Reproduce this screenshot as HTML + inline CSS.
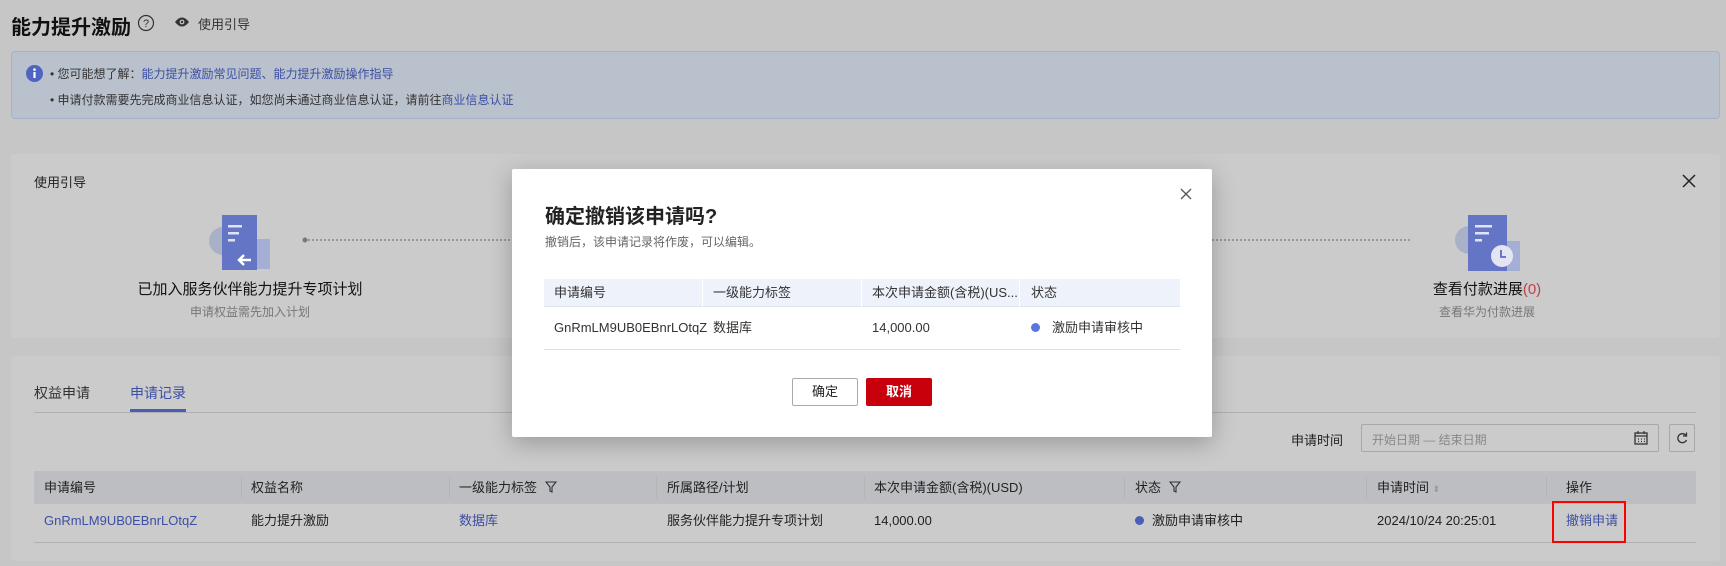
<!DOCTYPE html>
<html><head><meta charset="utf-8"><style>
*{margin:0;padding:0;box-sizing:border-box}
body{width:1726px;height:566px;overflow:hidden;background:#c6c6c6;font-family:"Liberation Sans","Noto Sans CJK SC",sans-serif;font-size:13px;color:#1f1f1f;position:relative}
.a{position:absolute;white-space:nowrap}
.lk{color:#3c4fa3}
.card{position:absolute;background:#cbcbcb;border-radius:4px}
.th{position:absolute;top:471px;height:33px;line-height:33px;color:#222}
.sep{position:absolute;top:477px;width:1px;height:21px;background:#b4b4b4}
.td{position:absolute;top:512px;line-height:18px}
.mh{position:absolute;top:279px;height:28px;line-height:28px;color:#333}
.mr{position:absolute;top:307px;height:42px;line-height:42px;color:#333}
</style></head><body>
<div class="a" style="left:11px;top:11px;font-size:20px;font-weight:bold;color:#111">能力提升激励</div>
<svg class="a" style="left:137px;top:14px" width="18" height="18" viewBox="0 0 18 18"><circle cx="9" cy="9" r="7.5" fill="none" stroke="#333" stroke-width="1.2"/><text x="9" y="13" font-size="11" text-anchor="middle" fill="#333" font-family="Liberation Sans">?</text></svg>
<svg class="a" style="left:174px;top:16px" width="16" height="12" viewBox="0 0 16 12"><path d="M1 6Q8 -3 15 6Q8 15 1 6Z" fill="#333"/><circle cx="8" cy="6" r="2.4" fill="#c6c6c6"/><circle cx="8" cy="6" r="1.2" fill="#333"/></svg>
<div class="a" style="left:198px;top:14px;font-size:13px;color:#333">使用引导</div>

<div class="a" style="left:11px;top:51px;width:1709px;height:68px;background:#b9c1cc;border:1px solid #a5b1d1;border-radius:4px"></div>
<svg class="a" style="left:26px;top:65px" width="17" height="17"><circle cx="8.5" cy="8.5" r="8.5" fill="#4e63c2"/><rect x="7.4" y="7" width="2.2" height="6" fill="#fff"/><circle cx="8.5" cy="4.6" r="1.3" fill="#fff"/></svg>
<div class="a" style="left:50px;top:65px;font-size:12px;color:#333">• 您可能想了解：<span class="lk">能力提升激励常见问题、能力提升激励操作指导</span></div>
<div class="a" style="left:50px;top:91px;font-size:12px;color:#333">• 申请付款需要先完成商业信息认证，如您尚未通过商业信息认证，请前往<span class="lk">商业信息认证</span></div>

<div class="card" style="left:11px;top:154px;width:1709px;height:184px"></div>
<div class="a" style="left:34px;top:172px;font-size:13px;color:#222">使用引导</div>
<svg class="a" style="left:1682px;top:174px" width="14" height="14"><path d="M1 1L13 13M13 1L1 13" stroke="#222" stroke-width="1.5"/></svg>
<svg class="a" style="left:205px;top:213px" width="70" height="64"><circle cx="18" cy="28" r="14" fill="#a9b1c9"/><rect x="38" y="26" width="27" height="30" fill="#a5afd6"/><rect x="17" y="2" width="35" height="55" fill="#6475c6"/><rect x="23" y="12" width="14" height="2.5" fill="#dfe3f5"/><rect x="23" y="19" width="11" height="2.5" fill="#dfe3f5"/><rect x="23" y="26" width="7" height="2.5" fill="#dfe3f5"/><path d="M46 47H34M39 42L34 47L39 52" stroke="#fff" stroke-width="2.5" fill="none"/></svg>
<svg class="a" style="left:302px;top:236px" width="210" height="8"><circle cx="3" cy="4" r="2.5" fill="#777"/><line x1="6" y1="4" x2="210" y2="4" stroke="#888" stroke-width="1.5" stroke-dasharray="2 2"/></svg>
<div class="a" style="left:250px;top:278px;transform:translateX(-50%);font-size:15px;color:#111">已加入服务伙伴能力提升专项计划</div>
<div class="a" style="left:250px;top:303px;transform:translateX(-50%);font-size:12px;color:#777">申请权益需先加入计划</div>
<svg class="a" style="left:1212px;top:236px" width="200" height="8"><line x1="0" y1="4" x2="200" y2="4" stroke="#888" stroke-width="1.5" stroke-dasharray="2 2"/></svg>
<svg class="a" style="left:1452px;top:213px" width="70" height="60"><circle cx="17" cy="27" r="14" fill="#a9b1c9"/><rect x="38" y="28" width="30" height="30" fill="#a5afd6"/><rect x="16" y="2" width="39" height="56" fill="#6475c6"/><rect x="23" y="12" width="17" height="2.5" fill="#dfe3f5"/><rect x="23" y="19" width="14" height="2.5" fill="#dfe3f5"/><rect x="23" y="26" width="7" height="2.5" fill="#dfe3f5"/><circle cx="50" cy="43" r="11" fill="#e3e6f2"/><path d="M49 37V44H54" stroke="#5a6bc0" stroke-width="1.8" fill="none"/></svg>
<div class="a" style="left:1487px;top:278px;transform:translateX(-50%);font-size:15px;color:#111">查看付款进展<span style="color:#c04048">(0)</span></div>
<div class="a" style="left:1487px;top:303px;transform:translateX(-50%);font-size:12px;color:#777">查看华为付款进展</div>

<div class="card" style="left:11px;top:356px;width:1709px;height:205px"></div>
<div class="a" style="left:34px;top:383px;font-size:14px;color:#333">权益申请</div>
<div class="a" style="left:130px;top:383px;font-size:14px;color:#3c4fa3">申请记录</div>
<div class="a" style="left:34px;top:412px;width:1662px;height:1px;background:#b0b0b0"></div>
<div class="a" style="left:130px;top:409px;width:56px;height:3px;background:#4a5db8"></div>
<div class="a" style="left:1291px;top:430px;color:#222">申请时间</div>
<div class="a" style="left:1361px;top:424px;width:298px;height:28px;border:1px solid #a8a8a8;border-radius:2px"></div>
<div class="a" style="left:1372px;top:431px;color:#888;font-size:12px">开始日期 — 结束日期</div>
<svg class="a" style="left:1634px;top:431px" width="14" height="14"><rect x="1" y="2" width="12" height="11" fill="none" stroke="#333" stroke-width="1.3"/><path d="M4 0V3M10 0V3M1 5H13M4 8H5M7 8H8M10 8H11M4 10.5H5M7 10.5H8M10 10.5H11" stroke="#333" stroke-width="1.2"/></svg>
<div class="a" style="left:1669px;top:424px;width:26px;height:28px;border:1px solid #a8a8a8;border-radius:2px"></div>
<svg class="a" style="left:1676px;top:432px" width="12" height="12"><path d="M10 3.5A4.5 4.5 0 1 0 10.5 8" stroke="#333" stroke-width="1.3" fill="none"/><path d="M10.5 0.5V4H7" stroke="#333" stroke-width="1.3" fill="none"/></svg>

<div class="a" style="left:34px;top:471px;width:1662px;height:33px;background:#bdbec2"></div>
<div class="th" style="left:44px">申请编号</div><div class="sep" style="left:241px"></div>
<div class="th" style="left:251px">权益名称</div><div class="sep" style="left:449px"></div>
<div class="th" style="left:459px">一级能力标签 <svg width="12" height="12" style="vertical-align:-1px;margin-left:4px"><path d="M1 1H11L7 6V11L5 10V6Z" fill="none" stroke="#333" stroke-width="1.1"/></svg></div><div class="sep" style="left:656px"></div>
<div class="th" style="left:667px">所属路径/计划</div><div class="sep" style="left:864px"></div>
<div class="th" style="left:874px">本次申请金额(含税)(USD)</div><div class="sep" style="left:1124px"></div>
<div class="th" style="left:1135px">状态 <svg width="12" height="12" style="vertical-align:-1px;margin-left:4px"><path d="M1 1H11L7 6V11L5 10V6Z" fill="none" stroke="#333" stroke-width="1.1"/></svg></div><div class="sep" style="left:1366px"></div>
<div class="th" style="left:1377px">申请时间 <span style="color:#999;font-size:9px">⬍</span></div><div class="sep" style="left:1546px"></div>
<div class="th" style="left:1566px">操作</div>
<div class="td lk" style="left:44px">GnRmLM9UB0EBnrLOtqZ</div>
<div class="td" style="left:251px">能力提升激励</div>
<div class="td lk" style="left:459px">数据库</div>
<div class="td" style="left:667px">服务伙伴能力提升专项计划</div>
<div class="td" style="left:874px">14,000.00</div>
<div class="td" style="left:1135px"><span style="display:inline-block;width:9px;height:9px;border-radius:50%;background:#4a5db8;margin-right:8px"></span>激励申请审核中</div>
<div class="td" style="left:1377px">2024/10/24 20:25:01</div>
<div class="td lk" style="left:1566px">撤销申请</div>
<div class="a" style="left:34px;top:542px;width:1662px;height:1px;background:#b0b0b0"></div>
<div class="a" style="left:1552px;top:501px;width:74px;height:42px;border:2px solid #f00"></div>

<div class="a" style="left:512px;top:169px;width:700px;height:268px;background:#fff;border-radius:2px;box-shadow:0 6px 24px rgba(0,0,0,.25)"></div>
<svg class="a" style="left:1180px;top:188px" width="12" height="12"><path d="M1 1L11 11M11 1L1 11" stroke="#555" stroke-width="1.3"/></svg>
<div class="a" style="left:545px;top:204px;font-size:20px;font-weight:bold;color:#222;line-height:26px">确定撤销该申请吗?</div>
<div class="a" style="left:545px;top:233px;font-size:12px;color:#666;line-height:18px">撤销后，该申请记录将作废，可以编辑。</div>
<div class="a" style="left:544px;top:279px;width:636px;height:28px;background:#eef2fb;border-bottom:1px solid #dfe3ea"></div>
<div class="a" style="left:702px;top:279px;width:1px;height:28px;background:#fff"></div>
<div class="a" style="left:861px;top:279px;width:1px;height:28px;background:#fff"></div>
<div class="a" style="left:1019px;top:279px;width:1px;height:28px;background:#fff"></div>
<div class="mh" style="left:554px">申请编号</div>
<div class="mh" style="left:713px">一级能力标签</div>
<div class="mh" style="left:872px">本次申请金额(含税)(US...</div>
<div class="mh" style="left:1031px">状态</div>
<div class="mr" style="left:554px">GnRmLM9UB0EBnrLOtqZ</div>
<div class="mr" style="left:713px">数据库</div>
<div class="mr" style="left:872px">14,000.00</div>
<div class="mr" style="left:1031px"><span style="display:inline-block;width:9px;height:9px;border-radius:50%;background:#5b77de;margin-right:12px;vertical-align:0"></span>激励申请审核中</div>
<div class="a" style="left:544px;top:349px;width:636px;height:1px;background:#dfdfdf"></div>
<div class="a" style="left:792px;top:378px;width:66px;height:28px;border:1px solid #aaa;border-radius:2px;text-align:center;line-height:26px;color:#222">确定</div>
<div class="a" style="left:866px;top:378px;width:66px;height:28px;background:#c7000b;border-radius:2px;text-align:center;line-height:28px;color:#fff;font-weight:bold">取消</div>
</body></html>
